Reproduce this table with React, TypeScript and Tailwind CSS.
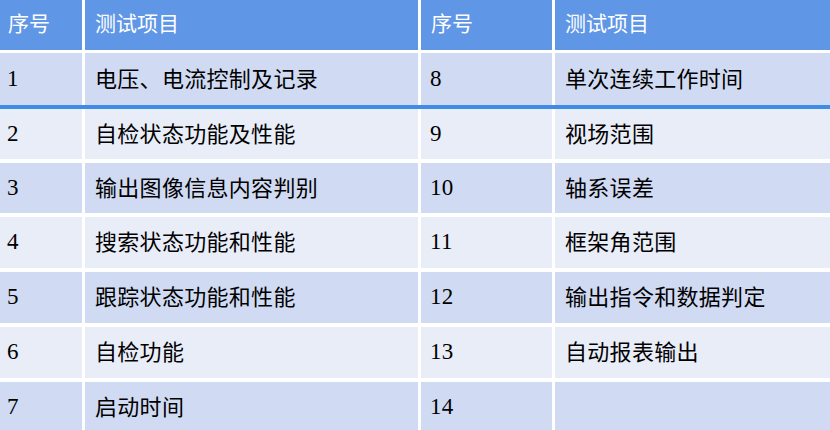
const rows = [
  { a: "1", b: "电压、电流控制及记录", c: "8", d: "单次连续工作时间", h: "h-[52px]" },
  { a: "2", b: "自检状态功能及性能", c: "9", d: "视场范围", h: "h-[50px]" },
  { a: "3", b: "输出图像信息内容判别", c: "10", d: "轴系误差", h: "h-[50px]" },
  { a: "4", b: "搜索状态功能和性能", c: "11", d: "框架角范围", h: "h-[51px]" },
  { a: "5", b: "跟踪状态功能和性能", c: "12", d: "输出指令和数据判定", h: "h-[51px]" },
  { a: "6", b: "自检功能", c: "13", d: "自动报表输出", h: "h-[51px]" },
  { a: "7", b: "启动时间", c: "14", d: "", h: "h-[51px]" },
];

const cols = "grid grid-cols-[82px_333px_131px_275px] gap-x-[3px]";
const font = { fontFamily: '"Liberation Serif", "Noto Sans CJK SC", serif' };

export default function App() {
  return (
    <div className="w-[830px] h-[430px] overflow-hidden bg-white" style={font}>
      {/* header */}
      <div className={`${cols} h-[50px] text-white text-[21px]`}>
        <div className="bg-[#5f96e6] flex items-center pl-[8px]">序号</div>
        <div className="bg-[#5f96e6] flex items-center pl-[10px]">测试项目</div>
        <div className="bg-[#5f96e6] flex items-center pl-[10px]">序号</div>
        <div className="bg-[#5f96e6] flex items-center pl-[10px]">测试项目</div>
      </div>

      <div className="mt-[3px] flex flex-col">
        {rows.map((r, i) => {
          const bg = i % 2 === 0 ? "bg-[#d0dbf3]" : "bg-[#e9edf8]";
          return (
            <div key={i} className={i < 2 ? "" : "mt-[4px]"}>
              <div className={`${cols} ${r.h} text-black text-[22px] tracking-[0.3px]`}>
                <div className={`${bg} flex items-center pl-[7px] text-[23px]`}>{r.a}</div>
                <div className={`${bg} flex items-center pl-[10px]`}>{r.b}</div>
                <div className={`${bg} flex items-center pl-[9px] text-[23px]`}>{r.c}</div>
                <div className={`${bg} flex items-center pl-[10px]`}>{r.d}</div>
              </div>
              {i === 0 && <div className="h-[4px] bg-[#3e8ce6]" />}
            </div>
          );
        })}
      </div>
    </div>
  );
}
